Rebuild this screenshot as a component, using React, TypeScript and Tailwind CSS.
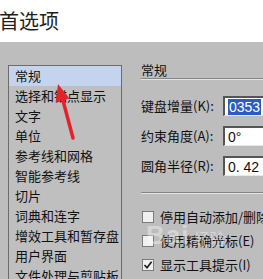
const CATEGORIES = [
  "常规",
  "选择和锚点显示",
  "文字",
  "单位",
  "参考线和网格",
  "智能参考线",
  "切片",
  "词典和连字",
  "增效工具和暂存盘",
  "用户界面",
  "文件处理与剪贴板",
];

const FIELDS = [
  { label: "键盘增量(K):", value: "0353", selected: true },
  { label: "约束角度(A):", value: "0°", selected: false },
  { label: "圆角半径(R):", value: "0. 42", selected: false },
];

const OPTIONS = [
  { label: "停用自动添加/删除", checked: false },
  { label: "使用精确光标(E)", checked: false },
  { label: "显示工具提示(I)", checked: true },
];

const cjk = "font-['Noto_Sans_CJK_SC','Noto_Sans',sans-serif]";

function Checkbox({ checked }: { checked: boolean }) {
  return (
    <div className="w-[12px] h-[12px] shrink-0 border border-[#7c7c7c] bg-[#f0f0f0] flex items-center justify-center">
      {checked && (
        <svg width="10" height="10" viewBox="0 0 10 10">
          <path d="M1.5 5 L4 7.8 L8.6 1.8" fill="none" stroke="#1a1a1a" strokeWidth="1.6" />
        </svg>
      )}
    </div>
  );
}

export default function App() {
  return (
    <div className={`relative w-[263px] h-[279px] overflow-hidden bg-[#bdbdbd] ${cjk}`}>
      <div className="h-[42px] bg-white leading-[42px] text-[20px] text-[#1e1e1e] -ml-[1px]">首选项</div>

      <div className="flex items-start">
        {/* category list */}
        <div className="mt-[23px] ml-[8px] w-[114px] h-[240px] shrink-0 border border-[#6c6c6c] bg-[#bfbfbf] overflow-hidden">
          {CATEGORIES.map((c, i) => (
            <div
              key={c}
              className={`h-[20px] leading-[20px] pl-[6px] text-[13px] text-[#111] whitespace-nowrap ${
                i === 0 ? "bg-[#c4d4ef]" : ""
              }`}
            >
              {c}
            </div>
          ))}
        </div>

        {/* settings panel */}
        <div className="ml-[19px] pt-[20px] flex-1 min-w-0">
          <div className="leading-[16px] text-[13px] text-[#111]">常规</div>
          <div className="h-[1px] bg-[#858585]" />
          <div className="h-[1px] bg-[#e4e4e4]" />

          <div className="mt-[16px] flex flex-col gap-[10px]">
            {FIELDS.map((f) => (
              <div key={f.label} className="flex items-center h-[20px] whitespace-nowrap">
                <div className="w-[82px] shrink-0 text-[13px] leading-[20px] text-[#111]">{f.label}</div>
                <div className="h-[20px] w-[60px] shrink-0 bg-white border-t-2 border-l-2 border-t-[#555] border-l-[#555] border-b border-r border-b-[#e8e8e8] border-r-[#e8e8e8] pl-[3px] flex items-center font-['Liberation_Sans',sans-serif] text-[14px] leading-[16px] text-[#111]">
                  {f.selected ? (
                    <span className="bg-[#2b5cc0] text-white px-[1px]">{f.value}</span>
                  ) : (
                    <span>{f.value}</span>
                  )}
                </div>
              </div>
            ))}
          </div>

          <div className="mt-[16px] h-[1px] bg-[#858585]" />
          <div className="h-[1px] bg-[#e4e4e4]" />

          <div className="mt-[13px] flex flex-col gap-[4px]">
            {OPTIONS.map((o) => (
              <div key={o.label} className="flex items-center h-[20px] pl-[1px] gap-[6px] whitespace-nowrap">
                <Checkbox checked={o.checked} />
                <span className="text-[13px] leading-[20px] text-[#111]">{o.label}</span>
              </div>
            ))}
          </div>
        </div>
      </div>

      {/* red annotation arrow */}
      <svg className="absolute left-0 top-0 pointer-events-none" width="263" height="279">
        <line x1="62.6" y1="99" x2="73" y2="138" stroke="#e3222b" strokeWidth="3.5" strokeLinecap="round" />
        <polygon points="58,84 69.5,98.4 55.6,102.4" fill="#e3222b" />
      </svg>

      {/* watermark */}
      <div className="absolute left-[146px] top-[222px] flex items-end gap-[4px] text-white/40 pointer-events-none">
        <span className="font-['Liberation_Sans',sans-serif] font-bold text-[26px] leading-[26px] tracking-[1px]">Bai</span>
        <span className="text-[16px] leading-[20px]">经验</span>
      </div>
    </div>
  );
}
